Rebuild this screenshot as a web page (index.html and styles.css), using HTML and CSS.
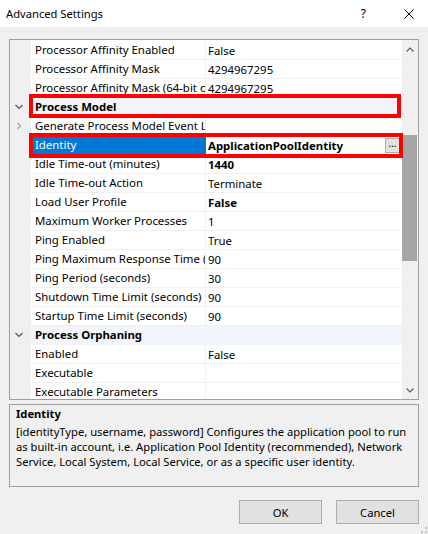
FILE: index.html
```html
<!DOCTYPE html>
<html>
<head>
<meta charset="utf-8">
<title>Advanced Settings</title>
<link rel="stylesheet" href="styles.css">
</head>
<body>
<div class="titlebar">
  <span class="title">Advanced Settings</span>
  <span class="help">?</span>
  <svg class="close" viewBox="0 0 10 10" width="10" height="10"><path d="M0.5 0.5 L9.5 9.5 M9.5 0.5 L0.5 9.5" stroke="#000" stroke-width="1" fill="none"/></svg>
</div>
<div class="main">
  <div class="grid">
    <div class="rows">
      <div class="row"><div class="gutter"></div><div class="name">Processor Affinity Enabled</div><div class="value">False</div></div>
      <div class="row"><div class="gutter"></div><div class="name">Processor Affinity Mask</div><div class="value">4294967295</div></div>
      <div class="row"><div class="gutter"></div><div class="name">Processor Affinity Mask (64-bit option)</div><div class="value">4294967295</div></div>
      <div class="row cat"><div class="gutter"><svg viewBox="0 0 21 19" width="21" height="19"><polyline points="5.5,7 9,10.5 12.5,7" fill="none" stroke="#555" stroke-width="1.2"/></svg></div><div class="catname">Process Model</div></div>
      <div class="row"><div class="gutter"><svg viewBox="0 0 21 19" width="21" height="19"><polyline points="7.5,6 10.5,9 7.5,12" fill="none" stroke="#a0a0a0" stroke-width="1.2"/></svg></div><div class="name">Generate Process Model Event Log Entry</div><div class="value"></div></div>
      <div class="row"><div class="gutter"></div><div class="name sel">Identity</div><div class="value b">ApplicationPoolIdentity<span class="dots">...</span></div></div>
      <div class="row"><div class="gutter"></div><div class="name">Idle Time-out (minutes)</div><div class="value b">1440</div></div>
      <div class="row"><div class="gutter"></div><div class="name">Idle Time-out Action</div><div class="value">Terminate</div></div>
      <div class="row"><div class="gutter"></div><div class="name">Load User Profile</div><div class="value b">False</div></div>
      <div class="row"><div class="gutter"></div><div class="name">Maximum Worker Processes</div><div class="value">1</div></div>
      <div class="row"><div class="gutter"></div><div class="name">Ping Enabled</div><div class="value">True</div></div>
      <div class="row"><div class="gutter"></div><div class="name">Ping Maximum Response Time (seconds)</div><div class="value">90</div></div>
      <div class="row"><div class="gutter"></div><div class="name">Ping Period (seconds)</div><div class="value">30</div></div>
      <div class="row"><div class="gutter"></div><div class="name">Shutdown Time Limit (seconds)</div><div class="value">90</div></div>
      <div class="row"><div class="gutter"></div><div class="name">Startup Time Limit (seconds)</div><div class="value">90</div></div>
      <div class="row cat"><div class="gutter"><svg viewBox="0 0 21 19" width="21" height="19"><polyline points="5.5,7 9,10.5 12.5,7" fill="none" stroke="#555" stroke-width="1.2"/></svg></div><div class="catname">Process Orphaning</div></div>
      <div class="row"><div class="gutter"></div><div class="name">Enabled</div><div class="value">False</div></div>
      <div class="row"><div class="gutter"></div><div class="name">Executable</div><div class="value"></div></div>
      <div class="row"><div class="gutter"></div><div class="name">Executable Parameters</div><div class="value"></div></div>
    </div>
    <div class="scrollbar">
      <div class="sb-btn"><svg viewBox="0 0 16 17" width="16" height="17"><polyline points="4.5,11.5 8,8 11.5,11.5" fill="none" stroke="#606060" stroke-width="1.2"/></svg></div>
      <div class="sb-track"><div class="sb-thumb"></div></div>
      <div class="sb-btn"><svg viewBox="0 0 16 17" width="16" height="17"><polyline points="4.5,6.5 8,10 11.5,6.5" fill="none" stroke="#606060" stroke-width="1.2"/></svg></div>
    </div>
    <div class="hl hl-model"></div>
    <div class="hl hl-identity"></div>
  </div>
  <div class="desc">
    <div class="desc-title">Identity</div>
    <div class="desc-text">[identityType, username, password] Configures the application pool to run as built-in account, i.e. Application Pool Identity (recommended), Network Service, Local System, Local Service, or as a specific user identity.</div>
  </div>
  <div class="buttons">
    <div class="btn">OK</div>
    <div class="btn">Cancel</div>
  </div>
</div>
<svg class="grip" viewBox="0 0 12 12" width="12" height="12"><g fill="#c4c4c4"><rect x="9" y="9" width="2" height="2"/><rect x="9" y="5" width="2" height="2"/><rect x="5" y="9" width="2" height="2"/></g></svg>
</body>
</html>
```

FILE: styles.css
```css
* { box-sizing: border-box; }
html, body { margin: 0; padding: 0; }
body {
  width: 428px;
  height: 534px;
  background: #f0f0f0;
  font-family: "Noto Sans", "Open Sans", sans-serif;
  font-size: 11.2px;
  color: #000;
  overflow: hidden;
  position: relative;
}
.titlebar {
  height: 27px;
  background: #fff;
  display: flex;
  align-items: center;
  padding-left: 6px;
  line-height: 27px;
}
.title { flex: 1; }
.help { margin-right: 38px; font-size: 12px; }
.close { display: block; margin-right: 14px; }

.main { padding: 12px 9px 0 9px; }

.grid {
  position: relative;
  display: flex;
  height: 361px;
  border: 1px solid #a0a0a0;
  background: #fff;
}
.rows {
  width: 392px;
  flex: none;
  padding-top: 1px;
  overflow: hidden;
  font-size: 11.4px;
  background: linear-gradient(to right, #f0f0f0 21px, #fff 21px);
}
.row { display: flex; height: 19px; }
.gutter { width: 21px; flex: none; background: #f0f0f0; }
.gutter svg { display: block; }
.name {
  width: 175px;
  flex: none;
  padding-left: 4px;
  white-space: nowrap;
  overflow: hidden;
  line-height: 17px;
  border-bottom: 1px solid #f0f0f0;
  border-right: 1px solid #f0f0f0;
}
.name.sel {
  background: #0078d7;
  color: #fff;
  border-color: #0078d7;
}
.value {
  width: 196px;
  flex: none;
  padding-left: 2px;
  white-space: nowrap;
  overflow: hidden;
  line-height: 17px;
  border-bottom: 1px solid #f0f0f0;
  display: flex;
  align-items: center;
}
.value.b { font-weight: bold; }
.dots {
  margin-left: auto;
  margin-right: 2px;
  width: 15px;
  height: 15px;
  background: #e1e1e1;
  border: 1px solid #adadad;
  font-weight: normal;
  font-size: 10px;
  line-height: 9px;
  text-align: center;
}
.cat .catname {
  width: 371px;
  flex: none;
  padding-left: 4px;
  background: #f2f5fa;
  font-weight: bold;
  line-height: 17px;
  white-space: nowrap;
}

.scrollbar {
  width: 16px;
  flex: none;
  background: #f0f0f0;
  display: flex;
  flex-direction: column;
}
.sb-btn { height: 17px; flex: none; }
.sb-btn svg { display: block; }
.sb-track { flex: 1; }
.sb-thumb {
  margin-top: 78px;
  width: 15px;
  height: 126px;
  background: #a6a6a6;
}

.hl {
  position: absolute;
  border: 4px solid #ff0000;
}
.hl-model { left: 19px; top: 54px; width: 372px; height: 24px; }
.hl-identity { left: 19px; top: 93px; width: 374px; height: 25px; }

.desc {
  margin-top: 4px;
  height: 83px;
  border: 1px solid #a0a0a0;
  padding: 1px 6px 0 6px;
  line-height: 15px;
}
.desc-title { font-weight: bold; margin-bottom: 3px; }

.buttons {
  display: flex;
  justify-content: flex-end;
  gap: 14px;
  margin-top: 13px;
}
.btn {
  width: 83px;
  height: 24px;
  background: #e1e1e1;
  border: 1px solid #adadad;
  display: flex;
  align-items: center;
  justify-content: center;
}
.grip { position: absolute; right: 0; bottom: 0; display: block; }
```
